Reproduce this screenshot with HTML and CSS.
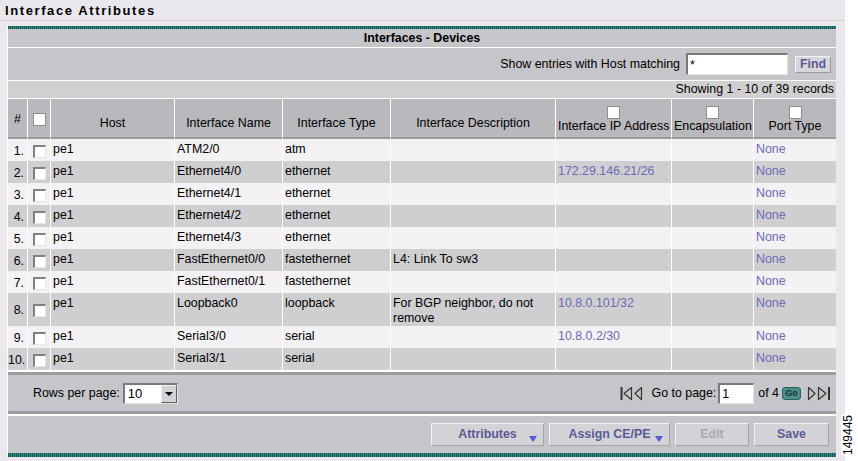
FILE: index.html
```html
<!DOCTYPE html>
<html lang="en">
<head>
    <meta charset="UTF-8">
    <title>Interface Attributes</title>
    <link rel="stylesheet" href="styles.css">
</head>
<body>
<div class="page">
    <div class="title">Interface Attributes</div>

    <div class="panel">
        <div class="stripe"></div>
        <div class="caption">Interfaces - Devices</div>
        <div class="filter">
            <span>Show entries with Host matching</span>
            <input class="field" type="text" value="*">
            <span class="find">Find</span>
        </div>
        <div class="count">Showing 1 - 10 of 39 records</div>

        <table class="grid">
            <thead>
            <tr>
                <th class="c-num">#</th>
                <th class="c-chk"><span class="hbox"></span></th>
                <th class="c-host low">Host</th>
                <th class="c-name low">Interface Name</th>
                <th class="c-type low">Interface Type</th>
                <th class="c-desc low">Interface Description</th>
                <th class="c-ip"><span class="hbox"></span><br>Interface IP Address</th>
                <th class="c-enc"><span class="hbox"></span><br>Encapsulation</th>
                <th class="c-port"><span class="hbox"></span><br>Port Type</th>
            </tr>
            </thead>
            <tbody>
            <tr>
                <td class="num">1.</td><td class="chk"><span class="box"></span></td>
                <td>pe1</td><td>ATM2/0</td><td>atm</td><td></td><td></td><td></td><td class="link">None</td>
            </tr>
            <tr>
                <td class="num">2.</td><td class="chk"><span class="box"></span></td>
                <td>pe1</td><td>Ethernet4/0</td><td>ethernet</td><td></td><td class="link">172.29.146.21/26</td><td></td><td class="link">None</td>
            </tr>
            <tr>
                <td class="num">3.</td><td class="chk"><span class="box"></span></td>
                <td>pe1</td><td>Ethernet4/1</td><td>ethernet</td><td></td><td></td><td></td><td class="link">None</td>
            </tr>
            <tr>
                <td class="num">4.</td><td class="chk"><span class="box"></span></td>
                <td>pe1</td><td>Ethernet4/2</td><td>ethernet</td><td></td><td></td><td></td><td class="link">None</td>
            </tr>
            <tr>
                <td class="num">5.</td><td class="chk"><span class="box"></span></td>
                <td>pe1</td><td>Ethernet4/3</td><td>ethernet</td><td></td><td></td><td></td><td class="link">None</td>
            </tr>
            <tr>
                <td class="num">6.</td><td class="chk"><span class="box"></span></td>
                <td>pe1</td><td>FastEthernet0/0</td><td>fastethernet</td><td>L4: Link To sw3</td><td></td><td></td><td class="link">None</td>
            </tr>
            <tr>
                <td class="num">7.</td><td class="chk"><span class="box"></span></td>
                <td>pe1</td><td>FastEthernet0/1</td><td>fastethernet</td><td></td><td></td><td></td><td class="link">None</td>
            </tr>
            <tr>
                <td class="num">8.</td><td class="chk"><span class="box"></span></td>
                <td>pe1</td><td>Loopback0</td><td>loopback</td><td>For BGP neighbor, do not remove</td><td class="link">10.8.0.101/32</td><td></td><td class="link">None</td>
            </tr>
            <tr>
                <td class="num">9.</td><td class="chk"><span class="box"></span></td>
                <td>pe1</td><td>Serial3/0</td><td>serial</td><td></td><td class="link">10.8.0.2/30</td><td></td><td class="link">None</td>
            </tr>
            <tr>
                <td class="num">10.</td><td class="chk"><span class="box"></span></td>
                <td>pe1</td><td>Serial3/1</td><td>serial</td><td></td><td></td><td></td><td class="link">None</td>
            </tr>
            </tbody>
        </table>

        <div class="pager">
            <div class="rows">
                <span>Rows per page:</span>
                <span class="select"><span class="val">10</span><span class="arrow"></span></span>
            </div>
            <div class="nav">
                <svg width="13" height="15" viewBox="0 0 13 15"><path d="M1.5 1v13" stroke="#333" stroke-width="2" fill="none"/><path d="M11.5 1.5 L4 7.5 L11.5 13.5 Z" stroke="#333" stroke-width="1.2" fill="none" stroke-linejoin="round"/></svg>
                <svg width="9" height="15" viewBox="0 0 9 15"><path d="M7.5 1.5 L1 7.5 L7.5 13.5 Z" stroke="#333" stroke-width="1.2" fill="none" stroke-linejoin="round"/></svg>
                <span class="goto">Go to page:</span>
                <input class="field pagefield" type="text" value="1">
                <span>of 4</span>
                <span class="go">Go</span>
                <svg width="9" height="15" viewBox="0 0 9 15"><path d="M1.5 1.5 L8 7.5 L1.5 13.5 Z" stroke="#333" stroke-width="1.2" fill="none" stroke-linejoin="round"/></svg>
                <svg width="14" height="15" viewBox="0 0 14 15"><path d="M1.5 1.5 L9 7.5 L1.5 13.5 Z" stroke="#333" stroke-width="1.2" fill="none" stroke-linejoin="round"/><path d="M12 1v13" stroke="#333" stroke-width="2" fill="none"/></svg>
            </div>
        </div>

        <div class="actions">
            <span class="btn w-attr">Attributes<i class="drop"></i></span>
            <span class="btn w-assign">Assign CE/PE<i class="drop"></i></span>
            <span class="btn w-edit off">Edit</span>
            <span class="btn w-save">Save</span>
        </div>
        <div class="stripe bottom"></div>
    </div>

    <div class="figno">149445</div>
</div>
</body>
</html>
```

FILE: styles.css
```css
html, body {
    margin: 0;
    padding: 0;
}
body {
    background: #fff;
    font-family: "Liberation Sans", Arial, sans-serif;
    font-size: 12.4px;
    color: #000;
}
.page {
    position: relative;
    width: 845px;
    height: 461px;
    background: #ebe8ed;
}
.title {
    height: 19px;
    line-height: 19px;
    padding: 1px 0 0 5px;
    font-size: 13px;
    font-weight: bold;
    letter-spacing: 1.6px;
    border-bottom: 1px solid #dccfd2;
}
.panel {
    margin: 5px 0 0 7px;
    width: 828px;
    border-left: 1px solid #fff;
    background: #c6c5c9;
}
.stripe {
    height: 3px;
    background: repeating-linear-gradient(90deg, #0e5853 0 1px, #3e8b85 1px 2px);
}
.stripe.bottom {
    height: 4px;
}
.caption {
    height: 18px;
    line-height: 18px;
    text-align: center;
    font-weight: bold;
    border-bottom: 1px solid #fff;
}
.filter {
    height: 32px;
    display: flex;
    align-items: center;
    justify-content: flex-end;
    padding-right: 5px;
    border-bottom: 1px solid #fff;
}
.field {
    box-sizing: border-box;
    height: 22px;
    padding: 0 2px;
    font: 12.4px "Liberation Sans", Arial, sans-serif;
    background: #fff;
    border-top: 2px solid #7a7a7a;
    border-left: 2px solid #7a7a7a;
    border-right: 1px solid #e4e4e4;
    border-bottom: 1px solid #e4e4e4;
    outline: none;
}
.filter .field {
    width: 102px;
    margin: 0 7px 0 6px;
    line-height: 12px;
    padding-top: 0;
    vertical-align: top;
}
.find {
    box-sizing: border-box;
    width: 36px;
    height: 17px;
    line-height: 14px;
    text-align: center;
    font-weight: bold;
    color: #5a5a8e;
    background: #d7d6db;
    border: 1px solid #f4f3f6;
    border-right-color: #9a999e;
    border-bottom-color: #9a999e;
}
.count {
    height: 17px;
    line-height: 17px;
    text-align: right;
    padding-right: 2px;
    background: #d0d0d2;
    border-bottom: 1px solid #fff;
}

/* table */
.grid {
    width: 828px;
    table-layout: fixed;
    border-collapse: separate;
    border-spacing: 0;
    border-bottom: 2px solid #fff;
}
.grid th,
.grid td {
    box-sizing: border-box;
    border-left: 1px solid #fff;
    padding: 0 2px;
    font-weight: normal;
    overflow: hidden;
}
.grid th:first-child,
.grid td:first-child {
    border-left: none;
}
.grid th {
    height: 40px;
    background: #b9b8bc;
    border-bottom: 2px solid #9c9b9f;
    text-align: center;
    vertical-align: middle;
    line-height: 14px;
    padding-top: 1px;
}
.grid th.low {
    padding-top: 10px;
}
.c-num { width: 19px; }
.c-chk { width: 23px; }
.c-host { width: 124px; }
.c-name { width: 108px; }
.c-type { width: 108px; }
.c-desc { width: 165px; }
.c-ip { width: 116px; }
.c-enc { width: 82px; }
.c-port { width: 83px; }
.c-ip, .c-enc, .c-port {
    white-space: nowrap;
}
.grid td {
    height: 22px;
    line-height: 15px;
    padding-top: 3px;
    vertical-align: top;
}
.grid tbody tr:nth-child(odd) td {
    background: #f3f1f4;
}
.grid tbody tr:nth-child(even) td {
    background: #cfcfd1;
}
.grid td.num {
    text-align: right;
    padding: 2px 3px 0 0;
    vertical-align: middle;
}
.grid td.chk {
    vertical-align: middle;
    padding: 2px 0 0 5px;
}
.link {
    color: #6b6bb4;
}
.hbox {
    display: inline-block;
    width: 11px;
    height: 11px;
    background: #fff;
    border: 1px solid #8e8d92;
    vertical-align: middle;
}
.box {
    display: block;
    box-sizing: border-box;
    width: 13px;
    height: 13px;
    background: #fff;
    border-top: 2px solid #808080;
    border-left: 2px solid #808080;
    border-right: 1px solid #e6e6e6;
    border-bottom: 1px solid #e6e6e6;
}

/* pager */
.pager {
    height: 36px;
    display: flex;
    align-items: center;
    justify-content: space-between;
    border-top: 3px solid #9d9ca0;
    border-bottom: 3px solid #9d9ca0;
    padding: 0 4px 0 25px;
}
.rows {
    display: flex;
    align-items: center;
    gap: 3px;
}
.select {
    box-sizing: border-box;
    display: flex;
    width: 55px;
    height: 21px;
    background: #fff;
    border-top: 2px solid #7a7a7a;
    border-left: 2px solid #7a7a7a;
    border-right: 1px solid #e4e4e4;
    border-bottom: 1px solid #e4e4e4;
}
.select .val {
    flex: 1;
    font-size: 13px;
    line-height: 17px;
    padding-left: 3px;
}
.select .arrow {
    position: relative;
    width: 16px;
    background: #d4d2d6;
    border: 1px solid #f0f0f0;
    border-right-color: #606060;
    border-bottom-color: #606060;
    box-sizing: border-box;
}
.select .arrow::after {
    content: "";
    position: absolute;
    left: 3px;
    top: 6px;
    border-left: 4px solid transparent;
    border-right: 4px solid transparent;
    border-top: 4px solid #000;
}
.nav {
    display: flex;
    align-items: center;
}
.nav svg {
    display: block;
    margin-right: 1px;
}
.goto {
    margin-left: 8px;
}
.pagefield {
    width: 36px;
    height: 21px;
    margin: 0 4px 0 2px;
}
.go {
    box-sizing: border-box;
    width: 19px;
    height: 13px;
    margin: 0 6px 0 3px;
    line-height: 11px;
    text-align: center;
    font-size: 9px;
    font-weight: bold;
    color: #143633;
    background: #4b8e89;
    border: 1px solid #2c625e;
    border-radius: 3px;
}

/* buttons */
.actions {
    height: 37px;
    border-top: 2px solid #fff;
    display: flex;
    align-items: center;
    justify-content: flex-end;
    gap: 5px;
    padding-right: 7px;
}
.btn {
    position: relative;
    box-sizing: border-box;
    height: 23px;
    line-height: 21px;
    text-align: center;
    font-weight: bold;
    color: #5b5b93;
    background: #d3d2d7;
    border: 1px solid #f2f1f4;
    border-right-color: #a4a3a8;
    border-bottom-color: #a4a3a8;
}
.btn.off {
    color: #a9a9b1;
}
.w-attr { width: 113px; }
.w-assign { width: 121px; }
.w-edit { width: 74px; }
.w-save { width: 75px; }
.drop {
    position: absolute;
    right: 6px;
    bottom: 3px;
    border-left: 4px solid transparent;
    border-right: 4px solid transparent;
    border-top: 6px solid #5a5ad0;
}
.figno {
    position: absolute;
    left: 828px;
    top: 428px;
    width: 40px;
    height: 14px;
    line-height: 14px;
    font-size: 12px;
    transform: rotate(-90deg);
    background: #fff;
}
```
